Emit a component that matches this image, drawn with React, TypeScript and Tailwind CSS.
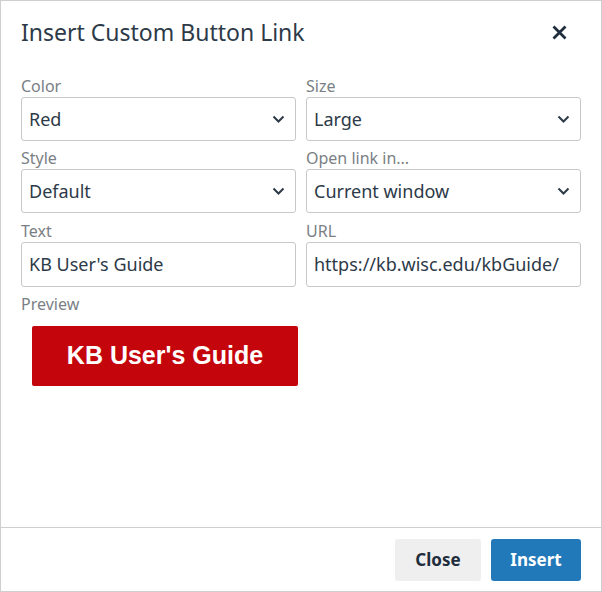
import React from "react";

const font = { fontFamily: '"Noto Sans", "Open Sans", sans-serif' };

const Chevron = () => (
  <svg width="13" height="8" viewBox="0 0 13 8" className="shrink-0">
    <path d="M1.5 1.5 L6.5 6.5 L11.5 1.5" fill="none" stroke="#2d3a48" strokeWidth="2" />
  </svg>
);

const SelectBox = ({ label, value }: { label: string; value: string }) => (
  <div className="flex flex-col">
    <label className="text-[16px] leading-[22px] text-[#7a7f85]">{label}</label>
    <div className="h-[44px] border border-[#c8c8c8] rounded-[3px] flex items-center justify-between pl-[7px] pr-[10px]">
      <span className="text-[18px] text-[#2d3a48]">{value}</span>
      <Chevron />
    </div>
  </div>
);

const TextBox = ({ label, value }: { label: string; value: string }) => (
  <div className="flex flex-col pt-[1px]">
    <label className="text-[16px] leading-[22px] text-[#7a7f85]">{label}</label>
    <div className="h-[45px] border border-[#c8c8c8] rounded-[3px] flex items-center pl-[7px] overflow-hidden">
      <span className="text-[18px] text-[#2d3a48] whitespace-nowrap">{value}</span>
    </div>
  </div>
);

export default function App() {
  return (
    <div style={font} className="w-[602px] h-[592px] bg-white border border-[#cfcfcf] flex flex-col">
      <div className="flex items-center justify-between pl-[20px] pr-[34px] pt-[10px] h-[58px] pb-[6px]">
        <h1 className="text-[23px] text-[#2d3a48]">Insert Custom Button Link</h1>
        <svg width="15" height="15" viewBox="0 0 15 15">
          <path d="M1.5 1.5 L13.5 13.5 M13.5 1.5 L1.5 13.5" stroke="#1f2d3d" strokeWidth="2.8" />
        </svg>
      </div>
      <div className="flex-1 px-[20px] pt-[16px]">
        <div className="grid grid-cols-2 gap-x-[10px] gap-y-[6px]">
          <SelectBox label="Color" value="Red" />
          <SelectBox label="Size" value="Large" />
          <SelectBox label="Style" value="Default" />
          <SelectBox label="Open link in..." value="Current window" />
          <TextBox label="Text" value="KB User's Guide" />
          <TextBox label="URL" value="https://kb.wisc.edu/kbGuide/" />
        </div>
        <div className="mt-[6px] text-[16px] leading-[22px] text-[#7a7f85]">Preview</div>
        <div className="mt-[11px] ml-[11px] w-[266px] h-[60px] bg-[#c5050c] rounded-[2px] flex items-center justify-center">
          <span
            className="text-white text-[25px] font-bold"
            style={{ fontFamily: '"Liberation Sans", Arial, sans-serif' }}
          >
            KB User's Guide
          </span>
        </div>
      </div>
      <div className="border-t border-[#cfcfcf] h-[64px] flex items-center justify-end gap-[10px] pr-[20px]">
        <button className="h-[42px] w-[86px] rounded-[3px] bg-[#efefef] text-[17px] font-bold text-[#1f2d3d]">
          Close
        </button>
        <button className="h-[42px] w-[90px] rounded-[3px] bg-[#2179b9] text-[17px] font-bold text-white">
          Insert
        </button>
      </div>
    </div>
  );
}
